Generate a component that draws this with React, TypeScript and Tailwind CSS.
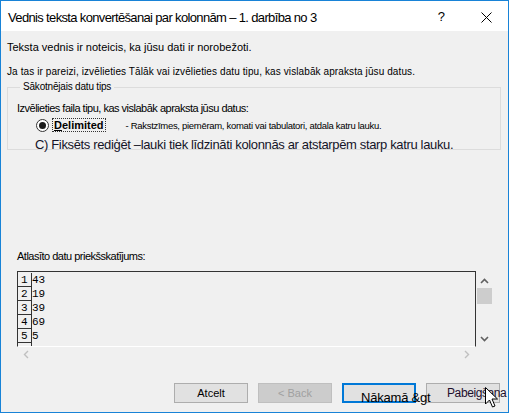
import React from "react";

const rows = ["43", "19", "39", "69", "5"];

function Btn({ children, variant }: { children: React.ReactNode; variant?: "disabled" | "primary" | "overflow" }) {
  if (variant === "disabled") {
    return (
      <div className="w-[74px] h-[20px] bg-[#cccccc] border border-[#bfbfbf] flex items-center justify-center text-[11px] text-[#a0a0a0]">
        {children}
      </div>
    );
  }
  if (variant === "primary") {
    return (
      <div className="w-[74px] h-[20px] bg-[#e1e1e1] border-2 border-[#0078d7] relative z-10">
        <span className="absolute left-[17px] top-[5px] whitespace-nowrap text-[13px] leading-[16px] tracking-[-0.2px] text-black">{children}</span>
      </div>
    );
  }
  if (variant === "overflow") {
    return (
      <div className="w-[74px] h-[20px] bg-[#e1e1e1] border border-[#adadad] relative">
        <span className="absolute left-[20px] top-[2px] whitespace-nowrap text-[12px] leading-[15px] tracking-[-0.4px] text-[#1e0f2d]">{children}</span>
      </div>
    );
  }
  return (
    <div className="w-[74px] h-[20px] bg-[#e1e1e1] border border-[#adadad] flex items-center justify-center text-[11px] text-black">
      {children}
    </div>
  );
}

export default function App() {
  return (
    <div className="w-[510px] h-[415px] bg-white relative" style={{ fontFamily: '"Liberation Sans", Arial, sans-serif' }}>
      <div className="w-[509px] h-[413px] border border-[#1883d7] bg-[#f0f0f0] flex flex-col">
        {/* Title bar */}
        <div className="h-[30px] bg-white flex items-center pl-[7px] pr-[16px] shrink-0">
          <span className="text-[13px] text-black tracking-[-0.65px] mt-[3px]">Vednis teksta konvertēšanai par kolonnām – 1. darbība no 3</span>
          <span className="ml-auto text-[13px] text-black mr-[36px] mt-[1px]">?</span>
          <svg width="11" height="11" viewBox="0 0 11 11" className="mt-[2px]">
            <path d="M0.5 0.5 L10.5 10.5 M10.5 0.5 L0.5 10.5" stroke="#000" strokeWidth="1" />
          </svg>
        </div>

        <div className="flex-1 flex flex-col px-[6px]">
          <div className="mt-[10px] text-[11px] leading-[13px] text-black">Teksta vednis ir noteicis, ka jūsu dati ir norobežoti.</div>
          <div className="mt-[11px] text-[10px] leading-[13px] text-black tracking-[0.1px]">Ja tas ir pareizi, izvēlieties Tālāk vai izvēlieties datu tipu, kas vislabāk apraksta jūsu datus.</div>

          <fieldset className="mt-[3px] w-[494px] h-[69px] border border-[#dcdcdc] px-[9px]">
            <legend className="ml-[3px] px-[3px] text-[10px] leading-[12px] text-black tracking-[-0.2px]">Sākotnējais datu tips</legend>
            <div className="mt-[9px] text-[11px] leading-[13px] text-black tracking-[-0.5px]">Izvēlieties faila tipu, kas vislabāk apraksta jūsu datus:</div>
            <div className="flex items-center mt-[2px] h-[16px]">
              <div className="ml-[19px] w-[13px] h-[13px] rounded-full border border-[#333] bg-white flex items-center justify-center">
                <div className="w-[7px] h-[7px] rounded-full bg-[#1a1a1a]" />
              </div>
              <div className="ml-[3px] px-[1px] border border-dotted border-[#333] text-[11px] leading-[12px] font-bold text-black">
                <span className="underline">D</span>elimited
              </div>
              <div className="ml-[20px] mt-[2px] text-[9.5px] leading-[12px] text-black tracking-[-0.3px]">- Rakstzīmes, piemēram, komati vai tabulatori, atdala katru lauku.</div>
            </div>
            <div className="ml-[18px] mt-[4px] text-[13px] leading-[15px] text-[#141428] tracking-[-0.35px]">C) Fiksēts rediģēt –lauki tiek līdzināti kolonnās ar atstarpēm starp katru lauku.</div>
          </fieldset>

          <div className="mt-[100px] ml-[10px] text-[11px] leading-[13px] text-black tracking-[-0.5px]">Atlasīto datu priekšskatījums:</div>

          {/* Preview */}
          <div className="mt-[8px] ml-[10px] w-[476px] flex flex-col">
            <div className="flex">
              <div className="w-[459px] h-[76px] border-t border-l border-r border-[#333] border-b border-b-white overflow-hidden">
                <div className="flex flex-col mt-[1px]">
                  {rows.concat([""]).map((r, i) => (
                    <div key={i} className="flex h-[14px] shrink-0">
                      <div className="w-[14px] h-[14px] border-r border-b border-[#333] text-[11px] leading-[14px] pl-[3px] text-black" style={{ fontFamily: '"Liberation Mono", "Courier New", monospace' }}>
                        {i < 5 ? i + 1 : ""}
                      </div>
                      <div className="text-[11px] leading-[14px] text-black" style={{ fontFamily: '"Liberation Mono", "Courier New", monospace' }}>{r}</div>
                    </div>
                  ))}
                </div>
              </div>
              <div className="w-[17px] h-[76px] flex flex-col items-center">
                <svg width="9" height="6" viewBox="0 0 9 6" className="mt-[7px]">
                  <path d="M1 5 L4.5 1.5 L8 5" stroke="#606060" strokeWidth="1.6" fill="none" />
                </svg>
                <div className="mt-[4px] w-[15px] h-[16px] bg-[#cdcdcd]" />
                <svg width="9" height="6" viewBox="0 0 9 6" className="mt-auto mb-[5px]">
                  <path d="M1 1 L4.5 4.5 L8 1" stroke="#606060" strokeWidth="1.6" fill="none" />
                </svg>
              </div>
            </div>
            <div className="h-[14px] w-[459px] flex items-center justify-between px-[6px]">
              <svg width="6" height="9" viewBox="0 0 6 9">
                <path d="M5 1 L1.5 4.5 L5 8" stroke="#c0c0c0" strokeWidth="1.4" fill="none" />
              </svg>
              <svg width="6" height="9" viewBox="0 0 6 9">
                <path d="M1 1 L4.5 4.5 L1 8" stroke="#c0c0c0" strokeWidth="1.4" fill="none" />
              </svg>
            </div>
          </div>

          <div className="mt-[22px] ml-[167px] flex gap-[10px]">
            <Btn>Atcelt</Btn>
            <Btn variant="disabled">&lt; Back</Btn>
            <Btn variant="primary">Nākamā &amp;gt</Btn>
            <Btn variant="overflow">Pabeigšana</Btn>
          </div>
        </div>
      </div>

      {/* cursor */}
      <svg width="14" height="22" viewBox="0 0 14 22" className="absolute left-[485px] top-[387px] z-20">
        <path d="M0.5 0.5 L0.5 17 L4.5 13 L7.5 20 L10 19 L7 12 L12.5 12 Z" fill="#fff" stroke="#000" strokeWidth="1" strokeLinejoin="round" />
      </svg>
    </div>
  );
}
